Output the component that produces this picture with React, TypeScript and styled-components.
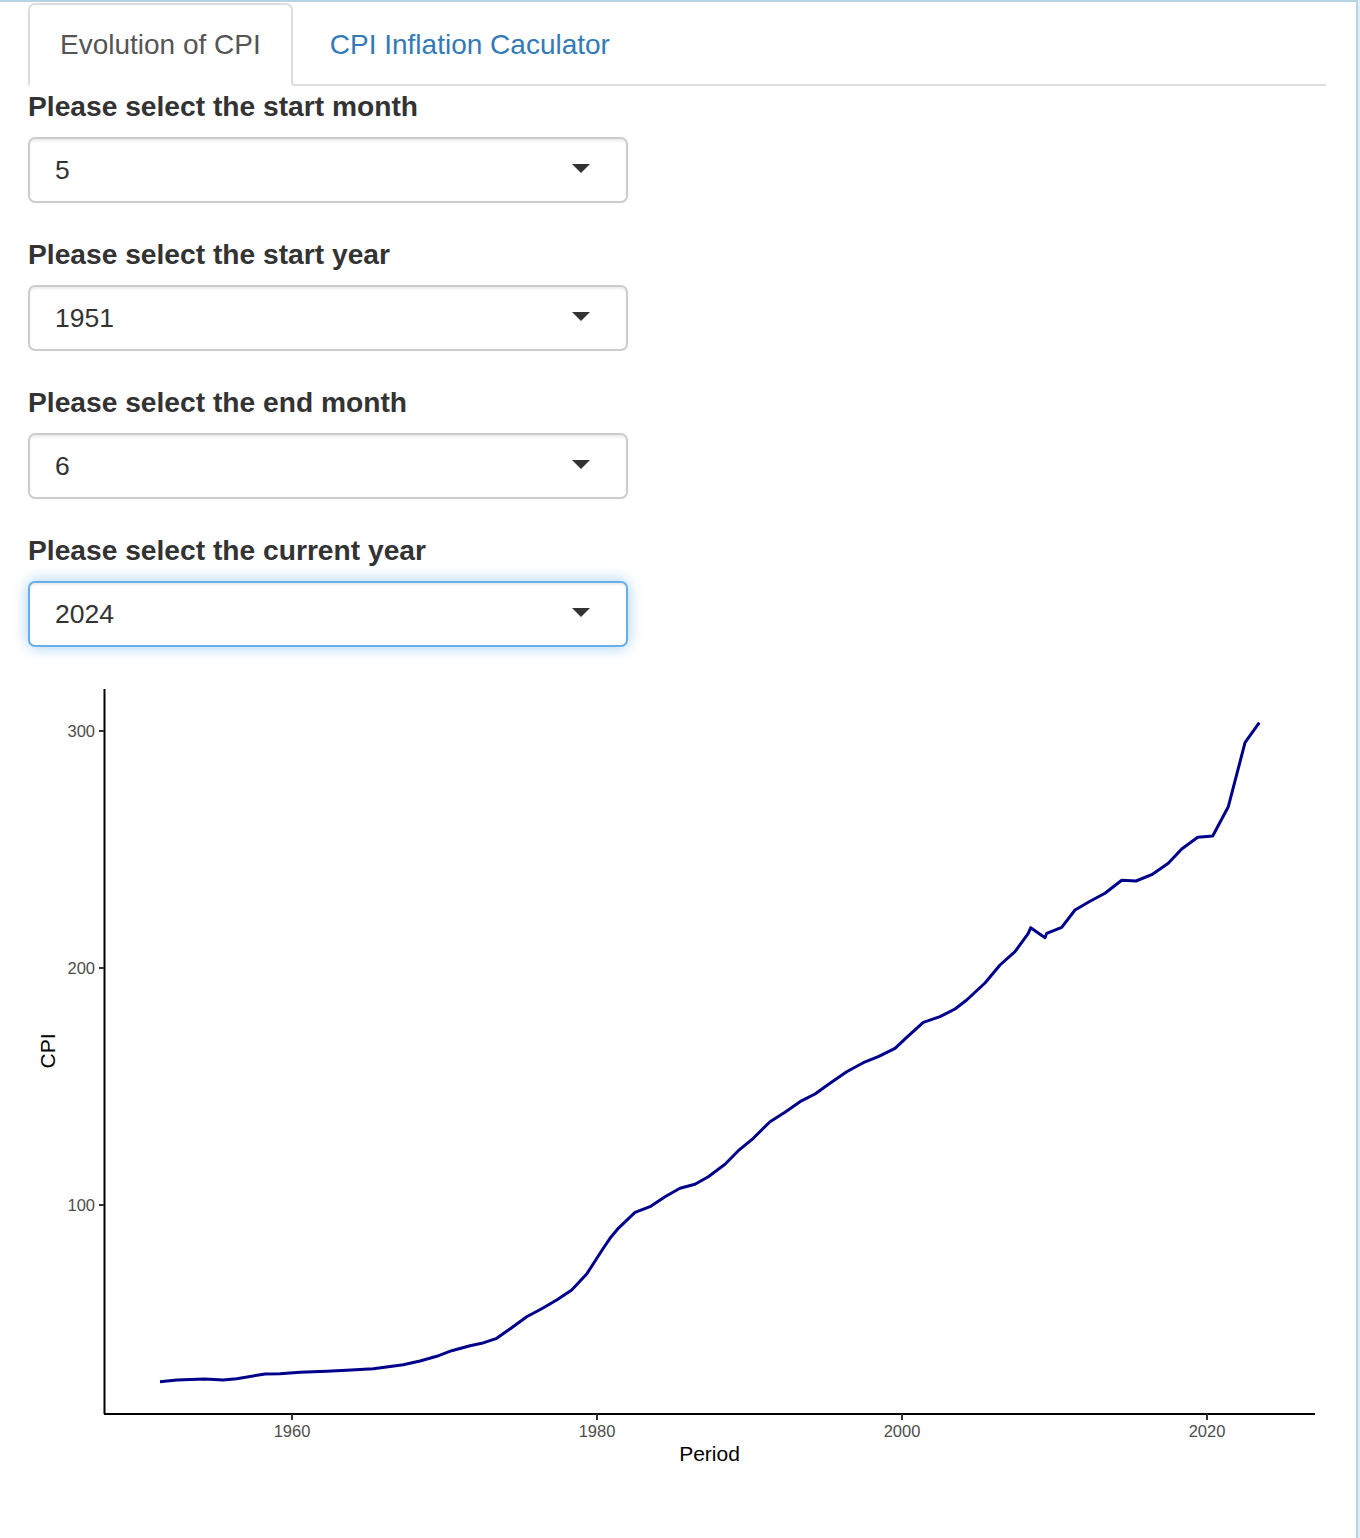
import React from 'react';
import styled, { createGlobalStyle } from 'styled-components';

const GlobalStyle = createGlobalStyle`
  html, body {
    margin: 0;
    padding: 0;
    background: #ffffff;
  }
  body {
    font-family: "Liberation Sans", Helvetica, Arial, sans-serif;
    color: #333333;
  }
`;

const Frame = styled.div`
  box-sizing: border-box;
  width: 1358px;
  min-height: 1538px;
  border-top: 2px solid #b6d4e4;
  border-right: 2px solid #b6d4e4;
  box-shadow: 2px 0 0 #ddeef6;
`;

const Container = styled.div`
  padding: 1px 30px 0 28px;
`;

const TabBar = styled.div`
  display: flex;
  border-bottom: 2px solid #dddddd;
`;

const Tab = styled.div<{ $active?: boolean }>`
  margin-right: 5px;
  margin-bottom: -2px;
  padding: 21px 30px;
  line-height: 37px;
  font-size: 28px;
  border: 2px solid transparent;
  border-radius: 7px 7px 0 0;
  color: ${(p) => (p.$active ? '#555555' : '#337ab7')};
  background: ${(p) => (p.$active ? '#ffffff' : 'transparent')};
  ${(p) => p.$active && 'border-color: #dddddd #dddddd #ffffff;'}
  cursor: pointer;
`;

const Group = styled.div`
  margin-bottom: 31px;
`;

const Label = styled.div`
  font-size: 28.2px;
  line-height: 40px;
  font-weight: bold;
  color: #333333;
  margin-bottom: 11px;
`;

const Select = styled.div<{ $focused?: boolean }>`
  box-sizing: border-box;
  width: 600px;
  height: 66px;
  display: flex;
  align-items: center;
  justify-content: space-between;
  padding: 0 36px 0 25px;
  border: 2px solid ${(p) => (p.$focused ? '#66afe9' : '#cccccc')};
  border-radius: 7px;
  background: #ffffff;
  font-size: 26.5px;
  color: #333333;
  box-shadow: ${(p) =>
    p.$focused
      ? 'inset 0 2px 2px rgba(0,0,0,0.075), 0 0 15px rgba(102,175,233,0.6)'
      : 'inset 0 2px 2px rgba(0,0,0,0.075)'};
`;

const Caret = styled.span`
  width: 0;
  height: 0;
  margin-top: -4px;
  border-left: 9px solid transparent;
  border-right: 9px solid transparent;
  border-top: 9px solid #333333;
`;

const PlotBox = styled.div`
  width: 1298px;
  height: 800px;
  svg {
    display: block;
  }
`;

const fields = [
  { label: 'Please select the start month', value: '5' },
  { label: 'Please select the start year', value: '1951' },
  { label: 'Please select the end month', value: '6' },
  { label: 'Please select the current year', value: '2024', focused: true },
];

// traced from the rendered ggplot, page coordinates
const cpiLine: [number, number][] = [
  [160, 1381.7], [176.7, 1380], [205, 1379], [223, 1380], [236.7, 1378.7],
  [265, 1374], [280, 1373.7], [300, 1372.3], [326.7, 1371.3], [346.7, 1370.3],
  [373.3, 1368.7], [403.3, 1364.7], [420, 1361], [436.7, 1356.3], [451.7, 1350.7],
  [470, 1345.7], [481.7, 1343.3], [496.7, 1338.3], [511.7, 1327.7], [526.7, 1316.7],
  [541.7, 1308.7], [556.7, 1300], [571.7, 1290], [586.7, 1274], [603.3, 1248.3],
  [610, 1238.3], [618.3, 1228.3], [635, 1212.3], [650, 1206.7], [665, 1196.7],
  [680, 1188.3], [695, 1184.3], [708.3, 1176.7], [725, 1164.3], [738.3, 1150.7],
  [753.3, 1138.3], [770, 1121.7], [785, 1112.3], [800, 1101.7], [815, 1094],
  [830, 1083.3], [846.7, 1071.7], [863.3, 1062.7], [878.3, 1056.7], [895, 1048.3],
  [906.7, 1037.3], [923.3, 1022.3], [940, 1016.7], [955, 1009], [966.7, 1000],
  [985, 983], [1000, 965], [1015, 951.7], [1028.3, 933.3], [1030.7, 927.7],
  [1045, 937.7], [1046.7, 933.3], [1061.7, 927.3], [1075, 910], [1090, 901.3],
  [1105, 893.3], [1121.7, 880.3], [1136, 881], [1151.7, 874.7], [1168.3, 863.3],
  [1181.7, 849], [1197.7, 837.3], [1212.7, 836], [1228.3, 806.7], [1245, 742.7],
  [1259.3, 722.7],
];

const yTicks = [
  { v: '300', y: 731 },
  { v: '200', y: 968 },
  { v: '100', y: 1205 },
];

const xTicks = [
  { v: '1960', x: 292 },
  { v: '1980', x: 597 },
  { v: '2000', x: 902 },
  { v: '2020', x: 1207 },
];

const PLOT_X = 28;
const PLOT_Y = 678;

const CpiChart = () => (
  <svg width={1298} height={800} viewBox="0 0 1298 800">
    <g transform={`translate(${-PLOT_X}, ${-PLOT_Y})`} fontFamily='"Liberation Sans", Helvetica, Arial, sans-serif'>
      <polyline
        points={cpiLine.map(([x, y]) => `${x},${y}`).join(' ')}
        fill="none"
        stroke="#00008b"
        strokeWidth={3}
        strokeLinejoin="round"
        strokeLinecap="butt"
      />
      <line x1={104.5} y1={689} x2={104.5} y2={1414} stroke="#000" strokeWidth={2} />
      <line x1={104} y1={1414} x2={1315} y2={1414} stroke="#000" strokeWidth={2} />
      {yTicks.map((t) => (
        <g key={t.v}>
          <line x1={99} y1={t.y} x2={104} y2={t.y} stroke="#333" strokeWidth={2} />
          <text x={95} y={t.y + 6} textAnchor="end" fontSize={16.5} fill="#4d4d4d">
            {t.v}
          </text>
        </g>
      ))}
      {xTicks.map((t) => (
        <g key={t.v}>
          <line x1={t.x} y1={1414} x2={t.x} y2={1420} stroke="#333" strokeWidth={2} />
          <text x={t.x} y={1437} textAnchor="middle" fontSize={16.5} fill="#4d4d4d">
            {t.v}
          </text>
        </g>
      ))}
      <text x={709.5} y={1461} textAnchor="middle" fontSize={21} fill="#000">
        Period
      </text>
      <text x={55} y={1051} textAnchor="middle" fontSize={21} fill="#000" transform="rotate(-90 55 1051)">
        CPI
      </text>
    </g>
  </svg>
);

export default function App() {
  return (
    <>
      <GlobalStyle />
      <Frame>
        <Container>
          <TabBar>
            <Tab $active>Evolution of CPI</Tab>
            <Tab>CPI Inflation Caculator</Tab>
          </TabBar>
          {fields.map((f) => (
            <Group key={f.label}>
              <Label>{f.label}</Label>
              <Select $focused={f.focused}>
                <span>{f.value}</span>
                <Caret />
              </Select>
            </Group>
          ))}
          <PlotBox>
            <CpiChart />
          </PlotBox>
        </Container>
      </Frame>
    </>
  );
}
